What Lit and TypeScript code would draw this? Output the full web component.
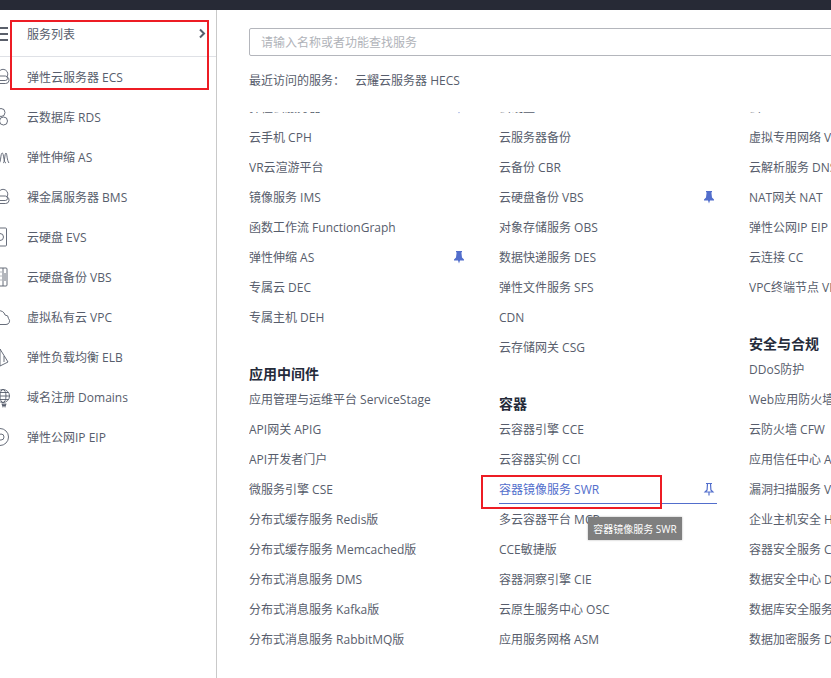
import { LitElement, html, css, svg } from "lit";
import { customElement } from "lit/decorators.js";

const serverCloud = svg`<path d="M-3 14.500H5.500a3.500 3.500 0 0 0 1.500-6.700 4.500 4.500 0 0 0-8-5.300"/><rect x="-3" y="7" width="10.500" height="4.500" rx="2.200"/>`;
const side: [string, any][] = [
  ["弹性云服务器 ECS", serverCloud],
  ["云数据库 RDS", svg`<circle cx="1" cy="3.500" r="4"/><circle cx="3.500" cy="12" r="4"/>`],
  ["弹性伸缩 AS", svg`<path d="M-1 14c2 0 1.500-10 3.200-10S3.500 14 6 14M3 14c2 0 1.500-10 3-10 1 0 1 8 3 10"/>`],
  ["裸金属服务器 BMS", serverCloud],
  ["云硬盘 EVS", svg`<rect x="-3" y="-1" width="9.500" height="18" rx="1"/><circle cx="0" cy="8" r="3.500"/>`],
  ["云硬盘备份 VBS", svg`<rect x="-3" y="-1" width="10" height="18" rx="1"/><path d="M3 -1v18M.5 3h1M.5 7h1M.5 11h1M5 4v8"/>`],
  ["虚拟私有云 VPC", svg`<path d="M-3 15.500h9a3.500 3.500 0 0 0 2.500-6 3.500 3.500 0 0 0-3.500-3.500A5.500 5.500 0 0 0-2 2"/>`],
  ["弹性负载均衡 ELB", svg`<path d="M0 0l8 13-8 4M0 0v17M-3 10h3M4 7v6"/>`],
  ["域名注册 Domains", svg`<circle cx="3" cy="7" r="6.500"/><ellipse cx="3" cy="7" rx="3" ry="6.500"/><path d="M-3.500 7h13M-2.500 3.500h11M-2.500 10.500h11"/><path d="M2 14.500l1 3 1-2.500 1 2.500 1-3" stroke-width="1.100"/>`],
  ["弹性公网IP EIP", svg`<circle cx="0" cy="8" r="8.500"/><path d="M-2 8a3 3 0 1 1 3 3h-2"/>`],
];

const col1 = ["云手机 CPH", "VR云渲游平台", "镜像服务 IMS", "函数工作流 FunctionGraph", "弹性伸缩 AS|p", "专属云 DEC", "专属主机 DEH"];
const col1b = ["应用管理与运维平台 ServiceStage", "API网关 APIG", "API开发者门户", "微服务引擎 CSE", "分布式缓存服务 Redis版", "分布式缓存服务 Memcached版", "分布式消息服务 DMS", "分布式消息服务 Kafka版", "分布式消息服务 RabbitMQ版"];
const col2 = ["云服务器备份", "云备份 CBR", "云硬盘备份 VBS|p", "对象存储服务 OBS", "数据快递服务 DES", "弹性文件服务 SFS", "CDN", "云存储网关 CSG"];
const col2b = ["云容器引擎 CCE", "云容器实例 CCI", "容器镜像服务 SWR|a", "多云容器平台 MCP", "CCE敏捷版", "容器洞察引擎 CIE", "云原生服务中心 OSC", "应用服务网格 ASM"];
const col3 = ["虚拟专用网络 VPN", "云解析服务 DNS", "NAT网关 NAT", "弹性公网IP EIP", "云连接 CC", "VPC终端节点 VPCEP"];
const col3b = ["DDoS防护", "Web应用防火墙 WAF", "云防火墙 CFW", "应用信任中心 ATC", "漏洞扫描服务 VSS", "企业主机安全 HSS", "容器安全服务 CGS", "数据安全中心 DSC", "数据库安全服务 DBSS", "数据加密服务 DEW"];

const pin = html`<svg class="pin" viewBox="0 0 12 14"><path d="M3 1h6v1l-.6.6.6 5 2 2v1H7l-1 3-1-3H1v-1l2-2 .6-5L3 2z"/></svg>`;
const pinOutline = html`<svg class="pin" viewBox="0 0 12 14"><path class="hollow" d="M3 1.500h6M4.500 1.500l-.4 6.500-2 2h7.800l-2-2-.4-6.500M6 10v3.500"/></svg>`;

@customElement("app-root")
export class AppRoot extends LitElement {
  static styles = css`
    :host { display: block; width: 831px; height: 678px; overflow: hidden; position: relative; background: #fff;
      font-family: "Open Sans", "Noto Sans CJK SC", sans-serif; font-size: 12px; color: #575d6c; }
    .top { height: 10px; background: #272a36; }
    .body { display: flex; height: 668px; }
    .side { width: 216px; flex: none; border-right: 1px solid #c9c9c9; }
    .hamb { position: absolute; left: -3px; top: 27px; width: 11px; height: 14px; }
    .head { height: 47px; padding: 1px 10px 0 27px; display: flex; align-items: center; justify-content: space-between;
      border-bottom: 1px solid #dfe1e6; box-sizing: border-box; color: #575d6c; }
    .chev { width: 8px; height: 11px; position: relative; }
    .srow { height: 40px; display: flex; align-items: center; padding-left: 27px; position: relative; }
    .srow svg { position: absolute; left: 0; top: 12px; width: 10px; height: 16px; overflow: visible; fill: none; stroke: #575d6c; stroke-width: .9; }
    .main { flex: 1; min-width: 0; padding: 18px 0 0 32px; overflow: hidden; }
    .search { width: 640px; height: 28px; box-sizing: border-box; border: 1px solid #b4b6bc; border-radius: 2px;
      padding-left: 11px; display: flex; align-items: center; color: #b0b3b9; font-size: 12px; }
    .recent { margin-top: 12px; height: 24px; display: flex; align-items: center; gap: 10px; color: #575d6c; }
    .scroll { margin-top: 20px; height: 564px; overflow: hidden; }
    .cols { display: flex; margin-top: -20px; }
    .col { width: 250px; flex: none; }
    .row { height: 30px; width: 218px; display: flex; align-items: center; justify-content: space-between;
      white-space: nowrap; box-sizing: border-box; }
    .row.a { color: #526ecc; border-bottom: 1px solid #526ecc; }
    .col3 .row { width: 250px; overflow: hidden; }
    h3 { margin: 32px 0 0; font-size: 14px; font-weight: 700; color: #252b3a; height: 20px; line-height: 20px; }
    .pin { width: 12px; height: 14px; flex: none; margin-right: 2px; fill: #526ecc; }
    .hollow { fill: none; stroke: #526ecc; stroke-width: 1.200; }
    .box { position: absolute; border: 2px solid #ed1c24; box-sizing: border-box; pointer-events: none; }
    .box1 { left: 10px; top: 20px; width: 199px; height: 70px; }
    .box2 { left: 481px; top: 475px; width: 181px; height: 34px; }
    .tip { position: absolute; left: 588px; top: 517px; height: 23px; width: 94px; background: #7f7f7f; color: #fff;
      font-size: 10px; display: flex; align-items: center; justify-content: center; white-space: nowrap; box-shadow: 0 0 2px rgba(0,0,0,.3); }
  `;

  private row(t: string) {
    const [label, flag] = t.split("|");
    return html`<div class="row ${flag === "a" ? "a" : ""}"><span>${label}</span>${flag === "p" ? pin : flag === "a" ? pinOutline : ""}</div>`;
  }

  render() {
    return html`
      <div class="top"></div>
      <svg class="hamb" viewBox="0 0 11 14"><path d="M0 1h11M0 7h11M0 13h11" stroke="#252b3a" stroke-width="1.500"/></svg>
      <div class="body">
        <aside class="side">
          <div class="head"><span>服务列表</span>
            <svg class="chev" viewBox="0 0 8 11"><path d="M2 1.500l4 4-4 4" fill="none" stroke="#575d6c" stroke-width="2"/></svg></div>
          ${side.map(([t, ic]) => html`<div class="srow"><svg viewBox="0 0 10 16">${ic}</svg><span>${t}</span></div>`)}
        </aside>
        <main class="main">
          <div class="search">请输入名称或者功能查找服务</div>
          <div class="recent"><span>最近访问的服务：</span><span>云耀云服务器 HECS</span></div>
          <div class="scroll"><div class="cols">
            <div class="col"><div class="row"><span>弹性云服务器</span>${pin}</div>${col1.map((t) => this.row(t))}<h3>应用中间件</h3>${col1b.map((t) => this.row(t))}</div>
            <div class="col"><div class="row"><span>云硬盘</span></div>${col2.map((t) => this.row(t))}<h3>容器</h3>${col2b.map((t) => this.row(t))}</div>
            <div class="col col3"><div class="row"><span>云 VPC</span></div>${col3.map((t) => this.row(t))}<h3>安全与合规</h3>${col3b.map((t) => this.row(t))}</div>
          </div></div>
        </main>
      </div>
      <div class="box box1"></div>
      <div class="box box2"></div>
      <div class="tip">容器镜像服务 SWR</div>
    `;
  }
}
